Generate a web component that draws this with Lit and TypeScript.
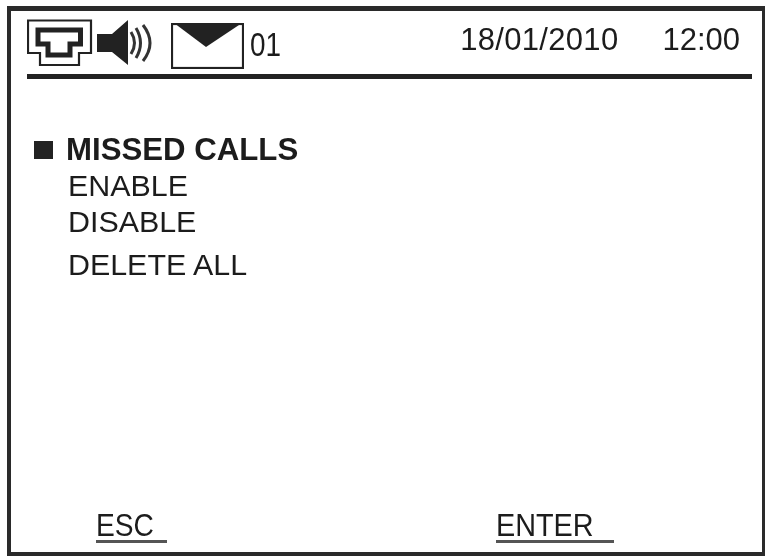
import { LitElement, html, css } from "lit";
import { customElement } from "lit/decorators.js";

@customElement("app-root")
export class AppRoot extends LitElement {
  static styles = css`
    :host {
      display: block;
      width: 765px;
      height: 557px;
      background: #fff;
      color: #1c1c1c;
      font-family: "Liberation Sans", Arial, sans-serif;
      overflow: hidden;
    }
    .frame {
      box-sizing: border-box;
      width: 758px;
      height: 550px;
      margin: 6px 0 0 7px;
      border: 4px solid #2a2a2a;
      border-top-width: 5px;
      border-right-width: 3px;
      padding: 0 0 0 16px;
      display: flex;
      flex-direction: column;
      filter: blur(0.45px);
    }
    .header {
      width: 725px;
      height: 63px;
      box-sizing: border-box;
      display: flex;
      align-items: flex-start;
      padding-top: 8px;
    }
    .phone { width: 68px; height: 48px; flex: none; }
    .speaker { width: 58px; height: 48px; flex: none; margin-left: 2px; }
    .mail { width: 73px; height: 46px; flex: none; margin-left: 16px; margin-top: 4px; }
    .count {
      font-size: 34px;
      line-height: 33px;
      margin: 9px 0 0 6px;
      display: inline-block;
      width: 31px;
      transform: scaleX(0.82);
      transform-origin: left center;
    }
    .date, .time { font-size: 31px; line-height: 32px; margin-top: 5px; }
    .date { margin-left: auto; letter-spacing: 0.3px; }
    .time { margin-left: 44px; margin-right: 12px; }
    .rule { width: 725px; height: 5px; background: #222; flex: none; }
    .menu {
      margin: 54px 0 0 0;
      display: flex;
      flex-direction: column;
      font-size: 30.4px;
    }
    .title {
      display: flex;
      align-items: center;
      font-weight: 700;
      font-size: 31.2px;
      line-height: 34px;
      margin-left: 7px;
    }
    .bullet { width: 19px; height: 18px; background: #222; margin-right: 13px; flex: none; }
    .item { margin-left: 41px; line-height: 36px; }
    .item.last { margin-top: 7px; }
    .footer {
      margin-top: auto;
      margin-left: 69px;
      margin-bottom: 9px;
      display: flex;
      font-size: 32px;
      line-height: 30px;
    }
    .key {
      box-sizing: border-box;
      border-bottom: 3px solid #555;
    }
    .key span {
      display: inline-block;
      transform-origin: left center;
    }
    .esc { width: 71px; }
    .esc span { transform: scaleX(0.88); }
    .enter { width: 118px; margin-left: 329px; }
    .enter span { transform: scaleX(0.9); }
  `;

  render() {
    return html`
      <div class="frame">
        <div class="header">
          <svg class="phone" viewBox="0 0 68 48" fill="none" stroke="#222">
            <path stroke-width="2.2" d="M1 1.500H64V34H52V46H13V34H1Z" />
            <path stroke-width="5" d="M11 11H53.500V25H43V36H21V25H11Z" />
          </svg>
          <svg class="speaker" viewBox="0 0 58 48">
            <path fill="#222" d="M0 15H15L31 1V46L15 33H0Z" />
            <g fill="none" stroke="#333" stroke-width="3">
              <path d="M34 13Q41 24 34 35" />
              <path d="M39 9Q48 24 39 39" />
              <path d="M46 6Q60 24 46 42" />
            </g>
          </svg>
          <svg class="mail" viewBox="0 0 73 46">
            <rect x="1" y="1" width="71" height="44" fill="#fff" stroke="#222" stroke-width="2.2" />
            <path fill="#222" d="M3 0H71L35 24Z" />
          </svg>
          <span class="count">01</span>
          <span class="date">18/01/2010</span>
          <span class="time">12:00</span>
        </div>
        <div class="rule"></div>
        <div class="menu">
          <div class="title"><i class="bullet"></i>MISSED CALLS</div>
          <div class="item">ENABLE</div>
          <div class="item">DISABLE</div>
          <div class="item last">DELETE ALL</div>
        </div>
        <div class="footer">
          <div class="key esc"><span>ESC</span></div>
          <div class="key enter"><span>ENTER</span></div>
        </div>
      </div>
    `;
  }
}
